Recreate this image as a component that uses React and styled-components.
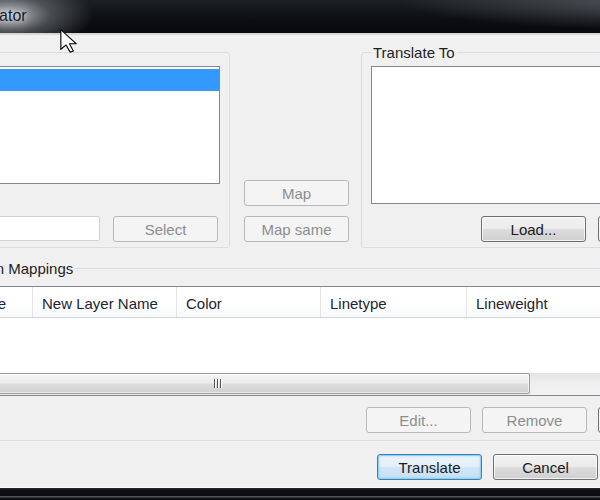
import React from 'react';
import styled, { createGlobalStyle } from 'styled-components';

const GlobalStyle = createGlobalStyle`
  html, body {
    margin: 0;
    padding: 0;
    background: #0b0d10;
    overflow: hidden;
  }
  body {
    font-family: "Liberation Sans", Arial, sans-serif;
  }
`;

export default function App() {
    return (
        <Screen>
            <GlobalStyle />
            <Window>
                <TitleBar>
                    <TitleText>Layer Translator</TitleText>
                </TitleBar>
                <Client>
                    <TopRow>
                        <Group $w={352}>
                            <Legend>Translate From</Legend>
                            <ListBox $h={118}>
                                <SelectedItem />
                            </ListBox>
                            <ButtonRow $gap={13} $mt={32} $pr={2}>
                                <TextField />
                                <Button disabled>Select</Button>
                            </ButtonRow>
                        </Group>

                        <MapColumn>
                            <Button disabled>Map</Button>
                            <Button disabled>Map same</Button>
                        </MapColumn>

                        <Group $pr={10}>
                            <Legend>Translate To</Legend>
                            <ListBox $h={138} />
                            <ButtonRow $gap={12} $mt={12} $end>
                                <Button>Load...</Button>
                                <Button>Save...</Button>
                            </ButtonRow>
                        </Group>
                    </TopRow>

                    <MappingsGroup>
                        <Legend>Layer Translation Mappings</Legend>
                        <ListView>
                            <Header>
                                <HeaderCell $w={145}>Old Layer Name</HeaderCell>
                                <HeaderCell $w={144}>New Layer Name</HeaderCell>
                                <HeaderCell $w={144}>Color</HeaderCell>
                                <HeaderCell $w={146}>Linetype</HeaderCell>
                                <HeaderCell>Lineweight</HeaderCell>
                                <HeaderCell>Plot style</HeaderCell>
                            </Header>
                            <ListBody />
                            <HScroll>
                                <ScrollArrow />
                                <Thumb $w={625}>
                                    <Grip><i /><i /><i /></Grip>
                                </Thumb>
                                <ScrollArrow />
                            </HScroll>
                        </ListView>
                        <ButtonRow $gap={11} $mt={11} $end>
                            <Button disabled>Edit...</Button>
                            <Button disabled>Remove</Button>
                            <Button>Save...</Button>
                        </ButtonRow>
                    </MappingsGroup>

                    <ButtonRow $gap={11} $mt={13} $end>
                        <Button $primary>Translate</Button>
                        <Button>Cancel</Button>
                        <Button>Help</Button>
                    </ButtonRow>
                </Client>
                <BottomFrame />
            </Window>

            <Cursor viewBox="0 0 12 19" preserveAspectRatio="none">
                <path
                    d="M0.6 0.6 L0.6 16.2 L4.3 12.6 L7.2 18.4 L9.4 17.4 L6.6 11.6 L11.4 11.6 Z"
                    fill="#fff"
                    stroke="#000"
                    strokeWidth="0.8"
                    strokeLinejoin="round"
                />
            </Cursor>
        </Screen>
    );
}

const Screen = styled.div`
    position: relative;
    width: 600px;
    height: 500px;
    overflow: hidden;
`;

/* the dialog is wider than the view, its left edge sits off screen */
const Window = styled.div`
    display: flex;
    flex-direction: column;
    width: 852px;
    height: 500px;
    margin-left: -130px;
`;

const TitleBar = styled.div`
    flex: none;
    height: 33px;
    box-sizing: border-box;
    display: flex;
    align-items: center;
    padding: 0 0 2px 41px;
    background:
        radial-gradient(ellipse 85px 36px at 138px 15px, rgba(196, 201, 206, 0.95), rgba(130, 136, 142, 0.5) 50%, rgba(0, 0, 0, 0) 100%),
        radial-gradient(ellipse 260px 30px at 790px 0, rgba(95, 100, 106, 0.8), rgba(0, 0, 0, 0) 100%),
        linear-gradient(#1d2024, #0c0e11 60%, #08090b);
`;

const TitleText = styled.span`
    font-size: 16px;
    color: #17202c;
    text-shadow: 0 0 6px rgba(235, 238, 242, 0.9), 0 0 12px rgba(220, 224, 228, 0.7);
`;

const Client = styled.div`
    flex: 1;
    display: flex;
    flex-direction: column;
    background: #f0f0f0;
    border-top: 2px solid #d4d7db;
    padding: 9px 8px 0 8px;
    font-size: 15px;
    color: #1e1e1e;
`;

const TopRow = styled.div`
    display: flex;
`;

const Group = styled.fieldset`
    margin: 0;
    min-width: 0;
    box-sizing: border-box;
    ${p => p.$w ? `width: ${p.$w}px; flex: none;` : 'flex: 1;'}
    display: flex;
    flex-direction: column;
    padding: 5px ${p => p.$pr || 9}px 5px 9px;
    border: 1px solid #d5dfe5;
    border-radius: 3px;
`;

const Legend = styled.legend`
    padding: 0 2px;
    font-size: 15px;
    line-height: 17px;
    color: #1e1e1e;
    white-space: nowrap;
`;

const ListBox = styled.div`
    height: ${p => p.$h}px;
    box-sizing: border-box;
    background: #fff;
    border: 1px solid #828790;
    padding: 2px 0;
`;

const SelectedItem = styled.div`
    height: 22px;
    background: #3399ff;
`;

const ButtonRow = styled.div`
    display: flex;
    gap: ${p => p.$gap}px;
    margin-top: ${p => p.$mt}px;
    padding-right: ${p => p.$pr || 0}px;
    justify-content: ${p => p.$end ? 'flex-end' : 'flex-start'};
`;

const TextField = styled.div`
    flex: 1;
    height: 25px;
    box-sizing: border-box;
    background: #fff;
    border: 1px solid #cfd2d6;
    border-radius: 2px;
`;

const Button = styled.button`
    flex: none;
    width: 105px;
    height: 26px;
    box-sizing: border-box;
    padding: 0;
    font-family: "Liberation Sans", Arial, sans-serif;
    font-size: 15px;
    color: #1b1b1b;
    border: 1px solid #707070;
    border-radius: 3px;
    background: linear-gradient(#f2f2f2 0%, #ebebeb 50%, #dddddd 50%, #cfcfcf 100%);
    box-shadow: inset 0 0 0 1px rgba(255, 255, 255, 0.7);

    ${p => p.$primary && `
        border-color: #3c7fb1;
        background: linear-gradient(#eef6fc 0%, #e2eff9 50%, #d1e6f6 50%, #c6e0f4 100%);
        box-shadow: inset 0 0 0 1px #8fd0f3, inset 0 0 3px 1px rgba(120, 200, 245, 0.6);
    `}

    &:disabled {
        color: #8d8d8d;
        border-color: #b5b9bc;
        background: #f4f4f4;
        box-shadow: none;
    }
`;

const MapColumn = styled.div`
    flex: none;
    width: 131px;
    box-sizing: border-box;
    display: flex;
    flex-direction: column;
    justify-content: flex-end;
    gap: 10px;
    padding: 0 12px 6px 14px;
`;

const MappingsGroup = styled(Group)`
    margin-top: 12px;
    padding: 9px 10px 7px 8px;
    flex: none;
`;

const ListView = styled.div`
    border: 1px solid #828790;
    background: #fff;
    overflow: hidden;
`;

const Header = styled.div`
    display: flex;
    height: 31px;
    box-sizing: border-box;
    border-bottom: 1px solid #d5d5d5;
    background: linear-gradient(#ffffff, #ffffff 50%, #f7f8f9);
`;

const HeaderCell = styled.div`
    ${p => p.$w ? `width: ${p.$w}px;` : 'width: 146px;'}
    flex: none;
    box-sizing: border-box;
    display: flex;
    align-items: center;
    padding: 2px 0 0 9px;
    border-right: 1px solid #e3e4e6;
    color: #1e2430;
    white-space: nowrap;
`;

const ListBody = styled.div`
    height: 55px;
`;

const HScroll = styled.div`
    display: flex;
    height: 22px;
    box-sizing: border-box;
    padding-bottom: 1px;
    background: linear-gradient(#e4e4e4, #eeeeee 40%, #f1f1f1);
`;

const ScrollArrow = styled.div`
    flex: none;
    width: 17px;
`;

const Thumb = styled.div`
    flex: none;
    width: ${p => p.$w}px;
    box-sizing: border-box;
    display: flex;
    align-items: center;
    justify-content: center;
    border: 1px solid #9a9a9a;
    border-radius: 2px;
    background: linear-gradient(#f4f4f4 0%, #ececec 45%, #dcdcdc 55%, #d2d2d2 100%);
    box-shadow: inset 0 0 0 1px rgba(255, 255, 255, 0.6);
`;

const Grip = styled.span`
    display: flex;
    gap: 2px;

    i {
        width: 1px;
        height: 9px;
        background: #555;
        box-shadow: 1px 0 0 #fff;
    }
`;

const BottomFrame = styled.div`
    flex: none;
    height: 12px;
    border-top: 1px solid #fafafa;
    background: linear-gradient(#2a2e33 0, #0d0f12 20%, #0b0d10 65%, #5d6166 72%, #101216 85%, #0a0b0d);
`;

const Cursor = styled.svg`
    position: absolute;
    left: 60px;
    top: 29px;
    width: 17px;
    height: 24px;
    overflow: visible;
`;
